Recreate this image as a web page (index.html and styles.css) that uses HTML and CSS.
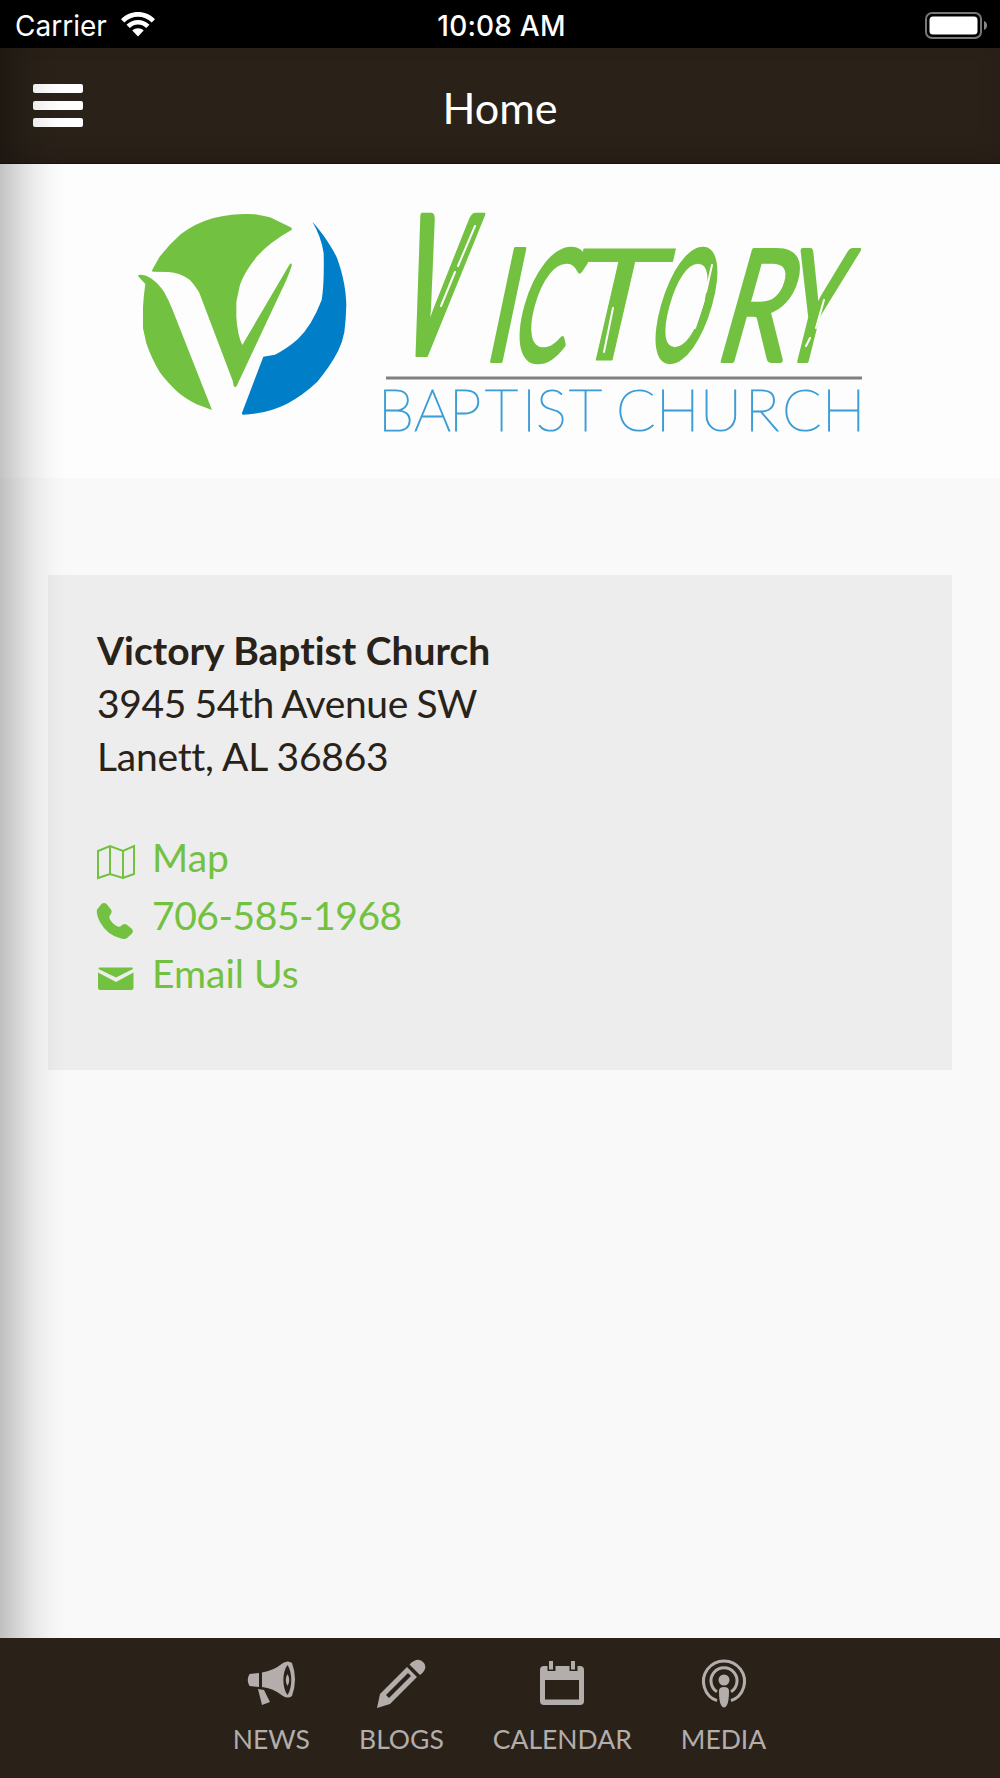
FILE: index.html
```html
<!DOCTYPE html>
<html lang="en">
<head>
  <meta charset="UTF-8">
  <meta name="viewport" content="width=device-width, initial-scale=1">
  <title>Victory Baptist Church</title>
  <link rel="stylesheet" href="styles.css">
</head>
<body>

<!-- Device status bar -->
<div class="status-bar">
  <div class="status-left">
    <span class="carrier">Carrier</span>
    <svg class="wifi" width="34" height="25" viewBox="0 0 34 25">
      <path d="M0 7.2C9.5-2.4 24.5-2.4 34 7.2L30.7 10.5C23 2.9 11 2.9 3.3 10.5Z"/>
      <path d="M5.5 12.8C12 6.4 22 6.4 28.5 12.8L25.2 16C20.4 11.4 13.6 11.4 8.8 16Z"/>
      <path d="M11.3 18.5C14.5 15.5 19.5 15.5 22.7 18.5L17 24.5Z"/>
    </svg>
  </div>
  <span class="time">10:08 AM</span>
  <div class="status-right">
    <svg width="63" height="28" viewBox="0 0 63 28">
      <rect x="1" y="1" width="55" height="25" rx="6" fill="none" stroke="#777" stroke-width="2"/>
      <rect x="4.5" y="4.5" width="48" height="18" rx="3.5" fill="#fff"/>
      <path d="M59 9C63 10.500 63 16.500 59 18Z" fill="#888"/>
    </svg>
  </div>
</div>

<div class="app">
  <!-- Title bar -->
  <header class="header">
    <button class="menu-button" aria-label="Menu">
      <span class="bar"></span>
      <span class="bar"></span>
      <span class="bar"></span>
    </button>
    <h1 class="title">Home</h1>
  </header>

  <!-- Logo banner -->
  <div class="banner">
    <svg class="logo" width="1000" height="314" viewBox="0 0 1000 314">
      <g transform="translate(120 26) scale(.33333)">
        <path class="green" d="M97 239L117 203Q145 166 182 133Q225 100 278 85Q305 78 335 74Q370 71 405 73Q430 77 450 82L512 112Q518 116 514 120Q450 156 412 198Q374 244 360 284L349 335V380Q352 435 367 465L510 221Q517 218 515 228C505 260 492 285 479 313L350 588Q346 594 341 588L338 572L237 306Q223 284 210 270Q180 248 145 246L100 245Q94 244 97 239Z"/>
        <path class="green" d="M54 258Q55 253 68 255C90 258 112 277 132 305Q148 334 157 358L276 660L230 643Q195 625 172 605Q140 575 119 546Q94 505 79 460L69 415V350Q71 315 76 282Z"/>
        <path class="blue" d="M577 95C615 138 638 175 652 206C668 252 678 295 679 345Q678 390 673 427Q668 455 654 484Q630 530 592 575Q550 615 500 642Q440 672 370 674Q363 674 367 666L430 500L465 494Q500 477 533 448Q575 408 605 330Q613 285 611 190Q604 140 577 95Z"/>
      </g>
      <g class="wordmark">
        <text class="heavy" transform="matrix(.46 0 -.22 1 391 191)" font-size="194">V</text>
        <text class="heavy" transform="matrix(.5 0 -.21 1 485 197)" font-size="155">I</text>
        <text transform="matrix(.54 0 -.28 1 506 197)" font-size="155">C</text>
        <text class="light" transform="matrix(1.05 0 -.23 1 556 196)" font-size="155">T</text>
        <text transform="matrix(.45 0 -.28 1 643 197)" font-size="155">O</text>
        <text transform="matrix(.72 0 -.28 1 712 197)" font-size="155">R</text>
        <text transform="matrix(.6 0 -.25 1 774 197)" font-size="155">Y</text>
      </g>
      <!-- Dry brush marks -->
      <path class="scratches" d="M475 62L458 102M455 108L441 142M613 144L604 188M712 101L706 128M704 136L695 164M824 136L816 164M810 174L806 182"/>
      <rect class="rule" x="386" y="212.500" width="476" height="3"/>
      <text class="tagline" y="267" x="378 414 449 485 522 536 569 589 616 656 700 745 782 822">BAPTIST CHURCH</text>
    </svg>
  </div>

  <!-- Contact card -->
  <main class="content">
    <section class="card">
      <address class="address">
        <strong>Victory Baptist Church</strong><br>
        <span class="street">3945 54th Avenue SW</span><br>
        <span class="city">Lanett, AL 36863</span>
      </address>
      <ul class="links">
        <li>
          <svg width="40" height="38" viewBox="0 0 40 38">
            <path class="outline" d="M2 8L14 3L27 8L38 3V31L27 35L14 31L2 35ZM14 3V31M27 8V35"/>
          </svg>
          <a href="#">Map</a>
        </li>
        <li>
          <svg width="40" height="38" viewBox="0 0 40 38">
            <path d="M1 8.500L5.500 3Q8 .8 10.500 3L15 8.500Q16.500 11 14.500 13.500Q12.500 15.500 14 18.500Q17 23.500 21.500 25.500Q23.500 26.500 25.500 24.500Q27.500 22 30.500 23.500L35.500 27.500Q38 30 36 32.500L31 37Q29 38.500 25 37.500Q11 34 4 21Q0 13 1 8.500Z"/>
          </svg>
          <a class="phone" href="#">706-585-1968</a>
        </li>
        <li>
          <svg width="40" height="38" viewBox="0 0 40 38">
            <path d="M3 8.500H36.500L37 10L20 18.500L2.500 10ZM2 13.500L20 23L37.500 13.500V28.500Q37.500 31 35 31H4.500Q2 31 2 28.500Z"/>
          </svg>
          <a href="#">Email Us</a>
        </li>
      </ul>
    </section>
  </main>
</div>

<!-- Bottom tabs -->
<nav class="tabs">
  <a class="tab" href="#">
    <svg width="50" height="50" viewBox="0 0 50 50">
      <path fill-rule="evenodd" d="M3.500 15L13 14V28L3.500 27Q0 21 3.500 15ZM16 13.500Q27 12 37 4Q42 1 46 4Q52 20 46 37Q42 40 37 37Q27 29 16 28ZM41.500 6C36 13 36 29 41.500 36C46.500 29 46.500 13 41.500 6ZM41.500 15Q45 21 41.500 27Q38 21 41.500 15ZM12 30L18 31L24 43L16 46Z"/>
    </svg>
    <span>NEWS</span>
  </a>
  <a class="tab" href="#">
    <svg width="50" height="50" viewBox="0 0 50 50">
      <path fill-rule="evenodd" d="M1 49L4 35L31 8L41 18L14 45ZM10 36L13 39L35 17L32 14ZM33.500 5.500Q42-3 48 4Q52 10 44 16Z"/>
    </svg>
    <span>BLOGS</span>
  </a>
  <a class="tab" href="#">
    <svg width="50" height="50" viewBox="0 0 50 50">
      <path fill-rule="evenodd" d="M7 7H10.500V12H18.500V7H32.500V12H40.500V7H43Q47 7 47 11V42Q47 46 43 46H7Q3 46 3 42V11Q3 7 7 7ZM8 21V40.500H42V21ZM12 2H16V10.500H12ZM34 2H38V10.500H34Z"/>
    </svg>
    <span>CALENDAR</span>
  </a>
  <a class="tab" href="#">
    <svg width="50" height="50" viewBox="0 0 50 50">
      <path class="ring" d="M18 41.700A20.500 20.500 0 1 1 32 41.700M18 32.800A13 13 0 1 1 32 32.800"/>
      <circle cx="25" cy="21" r="5.500"/>
      <path d="M20 32Q20 28 25 28Q30 28 30 32Q30 42 28 46Q25 51 22 46Q20 42 20 32Z"/>
    </svg>
    <span>MEDIA</span>
  </a>
</nav>

</body>
</html>
```

FILE: styles.css
```css
* {
  box-sizing: border-box;
}

body {
  margin: 0;
  height: 1778px;
  display: flex;
  flex-direction: column;
  font-family: Lato, "Open Sans", sans-serif;
  font-variant-ligatures: none;
  background: #f9f9f9;
  color: #292219;
}

/* Status bar */
.status-bar {
  height: 48px;
  padding: 3px 12px 0 15px;
  display: grid;
  grid-template-columns: 1fr auto 1fr;
  align-items: center;
  background: #000;
  color: #fff;
  font-family: Inter, "Liberation Sans", sans-serif;
  font-size: 28px;
}

.status-left {
  display: flex;
  align-items: center;
  gap: 14px;
}

.wifi {
  fill: #fff;
  margin-top: -3px;
}

.time {
  font-weight: 550;
  letter-spacing: 0.2px;
}

.status-right {
  display: flex;
  justify-content: flex-end;
}

/* Everything between the status bar and the tabs */
.app {
  flex: 1;
  position: relative;
}

.app::before {
  content: "";
  position: absolute;
  top: 0;
  bottom: 0;
  left: 0;
  width: 66px;
  background: linear-gradient(to right, rgba(0, 0, 0, 0.23), rgba(0, 0, 0, 0.15) 25%, rgba(0, 0, 0, 0.07) 50%, rgba(0, 0, 0, 0.02) 78%, transparent);
  pointer-events: none;
}

/* Header */
.header {
  height: 116px;
  padding: 0 33px;
  display: grid;
  grid-template-columns: 1fr auto 1fr;
  align-items: center;
  background: #2a2219;
  box-shadow: inset 0 -8px 20px rgba(30, 15, 15, 0.3);
  border-bottom: 1px solid #17110c;
  color: #fff;
}

.menu-button {
  width: 50px;
  padding: 0;
  display: flex;
  flex-direction: column;
  gap: 8px;
  background: none;
  border: none;
  cursor: pointer;
}

.bar {
  height: 9px;
  width: 50px;
  border-radius: 2px;
  background: #fff;
}

.title {
  margin: 2px 0 0;
  font-size: 43.2px;
  font-weight: 400;
}

/* Logo */
.banner {
  height: 314px;
  background: #fdfdfd;
}

.logo {
  display: block;
}

.green {
  fill: #72c141;
}

.blue {
  fill: #007fc8;
}

.wordmark {
  font-weight: 400;
  fill: #72c141;
  stroke: #72c141;
  stroke-width: 4;
  stroke-linejoin: round;
}

.wordmark .heavy {
  font-weight: 700;
}

.wordmark .light {
  stroke-width: 1;
}

.scratches {
  fill: none;
  stroke: #fdfdfd;
  stroke-width: 2;
  stroke-linecap: round;
}

.rule {
  fill: #808080;
}

.tagline {
  font-size: 58px;
  font-weight: 100;
  fill: #3d9dd6;
  stroke: #3d9dd6;
  stroke-width: 1.2;
}

/* Contact card */
.content {
  padding: 97px 48px 0;
}

.card {
  height: 495px;
  padding: 49px;
  background: #ededed;
}

.address {
  font-size: 39px;
  font-style: normal;
  line-height: 53px;
}

.street {
  letter-spacing: -0.4px;
  word-spacing: -1px;
}

.city {
  letter-spacing: -0.25px;
}

.links {
  margin: 45px 0 0;
  padding: 0;
  list-style: none;
}

.links li {
  height: 58px;
  display: flex;
  align-items: center;
  gap: 16px;
  font-size: 39px;
  line-height: 58px;
}

.links svg {
  margin-top: 10px;
  margin-left: -1px;
  fill: #72c141;
}

.links .outline {
  fill: none;
  stroke: #72c141;
  stroke-width: 2;
}

.links a {
  color: #72c141;
  text-decoration: none;
}

.links .phone {
  letter-spacing: -0.45px;
}

/* Bottom tabs */
.tabs {
  height: 140px;
  padding: 21px 1px 0 0;
  display: flex;
  justify-content: center;
  gap: 49px;
  background: #2a2219;
}

.tab {
  display: flex;
  flex-direction: column;
  align-items: center;
  gap: 14px;
  color: #b3aeab;
  font-size: 26.5px;
  text-decoration: none;
}

.tab svg {
  fill: #b3aeab;
}

.tab .ring {
  fill: none;
  stroke: #b3aeab;
  stroke-width: 3;
}
```
